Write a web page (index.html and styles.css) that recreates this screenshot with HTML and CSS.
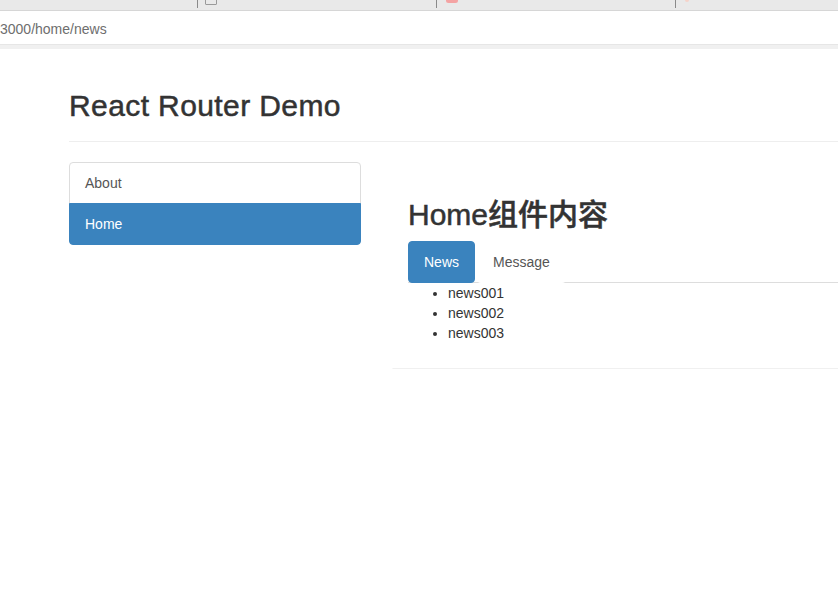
FILE: index.html
```html
<!DOCTYPE html>
<html lang="zh-CN">
<head>
<meta charset="utf-8">
<title>React Router Demo</title>
<link rel="stylesheet" href="styles.css">
</head>
<body>
<div class="chrome">
  <div class="tabstrip">
    <div class="tab tab-first"></div>
    <div class="tab"><span class="tab-icon icon-box"></span></div>
    <div class="tab"><span class="tab-icon icon-red"></span></div>
    <div class="tab tab-last"><span class="tab-icon icon-pale"></span></div>
  </div>
  <div class="addressbar"><span class="url">3000/home/news</span></div>
  <div class="band"></div>
</div>
<div class="page">
  <div class="page-header"><h2>React Router Demo</h2></div>
  <div class="row">
    <div class="side">
      <div class="list-group">
        <a class="list-item">About</a>
        <a class="list-item active">Home</a>
      </div>
    </div>
    <div class="panel">
      <div class="panel-body">
        <h2 class="home-title">Home组件内容</h2>
        <ul class="nav-tabs">
          <li><a class="tab-link tab-active">News</a></li>
          <li><a class="tab-link">Message</a></li>
        </ul>
        <ul class="news">
          <li>news001</li>
          <li>news002</li>
          <li>news003</li>
        </ul>
      </div>
    </div>
  </div>
</div>
</body>
</html>
```
FILE: styles.css
```css
html, body {
  margin: 0;
  padding: 0;
  background: #fff;
}
body {
  font-family: "Liberation Sans", Arial, "Noto Sans CJK SC", sans-serif;
  font-size: 14px;
  line-height: 20px;
  color: #333;
  overflow: hidden;
}
.chrome {
  height: 49px;
  display: flex;
  flex-direction: column;
}
.tabstrip {
  height: 10px;
  background: #e9e9e9;
  border-bottom: 1px solid #d6d6d6;
  display: flex;
  overflow: hidden;
}
.tab {
  width: 238px;
  flex: none;
  border-left: 1px solid #8a8a8a;
  height: 8px;
  position: relative;
}
.tab-first {
  width: 197px;
  border-left: none;
}
.tab-last {
  flex: 1;
  width: auto;
}
.tab-icon {
  position: absolute;
  top: -4px;
  left: 7px;
}
.icon-box {
  width: 10px;
  height: 7px;
  border: 1px solid #9a9a9a;
  border-radius: 1px;
}
.icon-red {
  left: 9px;
  top: -2px;
  width: 12px;
  height: 5px;
  border-radius: 3px;
  background: #f4a3a3;
}
.icon-pale {
  left: 9px;
  top: -2px;
  width: 4px;
  height: 4px;
  border-radius: 2px;
  background: #f6d3c9;
}
.addressbar {
  height: 33px;
  background: #fff;
  display: flex;
  align-items: center;
}
.url {
  color: #6e6e6e;
  font-size: 14px;
  padding-top: 3px;
}
.band {
  height: 4px;
  background: #f0f0f0;
  border-top: 1px solid #e6e6e6;
}
.page {
  padding-left: 69px;
  padding-top: 0.02px;
}
h2 {
  font-size: 30px;
  line-height: 33px;
  font-weight: 500;
  margin: 20px 0 10px;
  color: #333;
  -webkit-text-stroke: 0.5px #333;
}
.page-header {
  margin: 40px 0 20px;
  padding-bottom: 9px;
  border-bottom: 1px solid #eee;
}
.page-header h2 {
  letter-spacing: 0.4px;
}
.row {
  display: flex;
  align-items: flex-start;
}
.side {
  width: 292px;
  flex: none;
}
.list-group {
  display: flex;
  flex-direction: column;
}
.list-item {
  display: block;
  padding: 10px 15px;
  border: 1px solid #ddd;
  margin-bottom: -1px;
  background: #fff;
  color: #555;
}
.list-item:first-child {
  border-radius: 4px 4px 0 0;
}
.list-item:last-child {
  border-radius: 0 0 4px 4px;
  margin-bottom: 0;
}
.list-item.active {
  background: #3a83be;
  border-color: #3a83be;
  color: #fff;
}
.panel {
  flex: 1;
  margin-left: 31px;
  border: 1px solid transparent;
  border-right: none;
  border-bottom: 1px solid #f0f0f0;
}
.panel-body {
  padding: 15px 0 15px 15px;
}
.home-title {
  margin-top: 20px;
}
.nav-tabs {
  list-style: none;
  margin: 0;
  padding: 0;
  display: flex;
  border-bottom: 1px solid #ddd;
}
.nav-tabs li {
  margin-bottom: -1px;
}
.tab-link {
  display: block;
  padding: 10px 15px;
  margin-right: 2px;
  border: 1px solid transparent;
  border-radius: 4px;
  background: #fff;
  color: #555;
}
.tab-active {
  background: #3a83be;
  border-color: #3a83be;
  color: #fff;
}
.news {
  margin: 0 0 10px;
  padding-left: 40px;
}
```
